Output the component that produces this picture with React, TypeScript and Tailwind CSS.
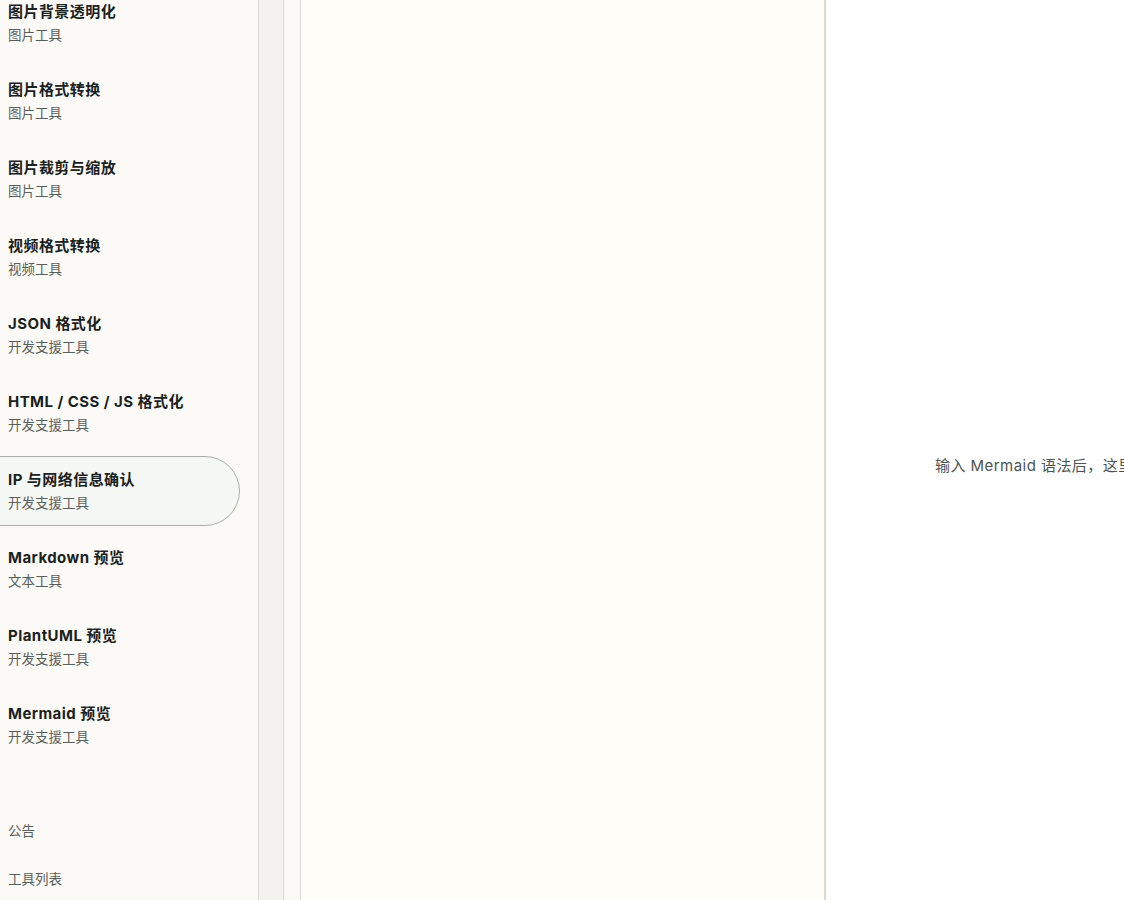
import React from 'react';

const tools = [
  { title: '图片背景透明化', category: '图片工具' },
  { title: '图片格式转换', category: '图片工具' },
  { title: '图片裁剪与缩放', category: '图片工具' },
  { title: '视频格式转换', category: '视频工具' },
  { title: 'JSON 格式化', category: '开发支援工具' },
  { title: 'HTML / CSS / JS 格式化', category: '开发支援工具' },
  { title: 'IP 与网络信息确认', category: '开发支援工具', active: true },
  { title: 'Markdown 预览', category: '文本工具' },
  { title: 'PlantUML 预览', category: '开发支援工具' },
  { title: 'Mermaid 预览', category: '开发支援工具' },
];

const font = { fontFamily: 'Inter, "Noto Sans CJK SC", sans-serif' };

export default function App() {
  return (
    <div className="flex h-[900px] w-[1124px] overflow-hidden bg-white" style={font}>
      {/* Sidebar */}
      <aside className="flex w-[259px] shrink-0 flex-col overflow-hidden border-r border-[#d9d7d1] bg-[#fbfaf6]">
        <nav className="-mt-[12px] flex flex-col gap-2 pr-[18px]">
          {tools.map((tool) => (
            <div
              key={tool.title}
              className={
                tool.active
                  ? '-ml-8 flex h-[70px] flex-col justify-center rounded-r-full border border-[#a9aea9] bg-[#f4f7f3] pl-[39px]'
                  : 'flex h-[70px] flex-col justify-center pl-2'
              }
            >
              <div className="text-[15px] font-bold leading-5 tracking-[0.03em] text-[#1a221e]">{tool.title}</div>
              <div className="mt-[3px] text-[13.5px] leading-5 text-[#59605c]">{tool.category}</div>
            </div>
          ))}
        </nav>

        {/* Footer links */}
        <div className="mt-[61px] flex flex-col gap-7 pl-2 text-[13.5px] leading-5 text-[#59605c]">
          <span>公告</span>
          <span>工具列表</span>
        </div>
      </aside>

      {/* Collapsed strip */}
      <div className="w-[25px] shrink-0 border-r border-[#d9d7d1] bg-[#f3f2ee]" />

      {/* Editor gutter + editor */}
      <div className="w-[17px] shrink-0 border-r border-[#d9d7d1] bg-[#fbfaf6]" />
      <div className="w-[525px] shrink-0 border-r-2 border-[#ddd9cd] bg-[#fffdf8]" />

      {/* Preview */}
      <div className="flex w-[524px] shrink-0 items-center bg-white pl-[109px] pt-[32px]">
        <p className="whitespace-nowrap text-[15px] tracking-[0.03em] text-[#4d5450]">输入 Mermaid 语法后，这里会显示图表预览。</p>
      </div>
    </div>
  );
}
